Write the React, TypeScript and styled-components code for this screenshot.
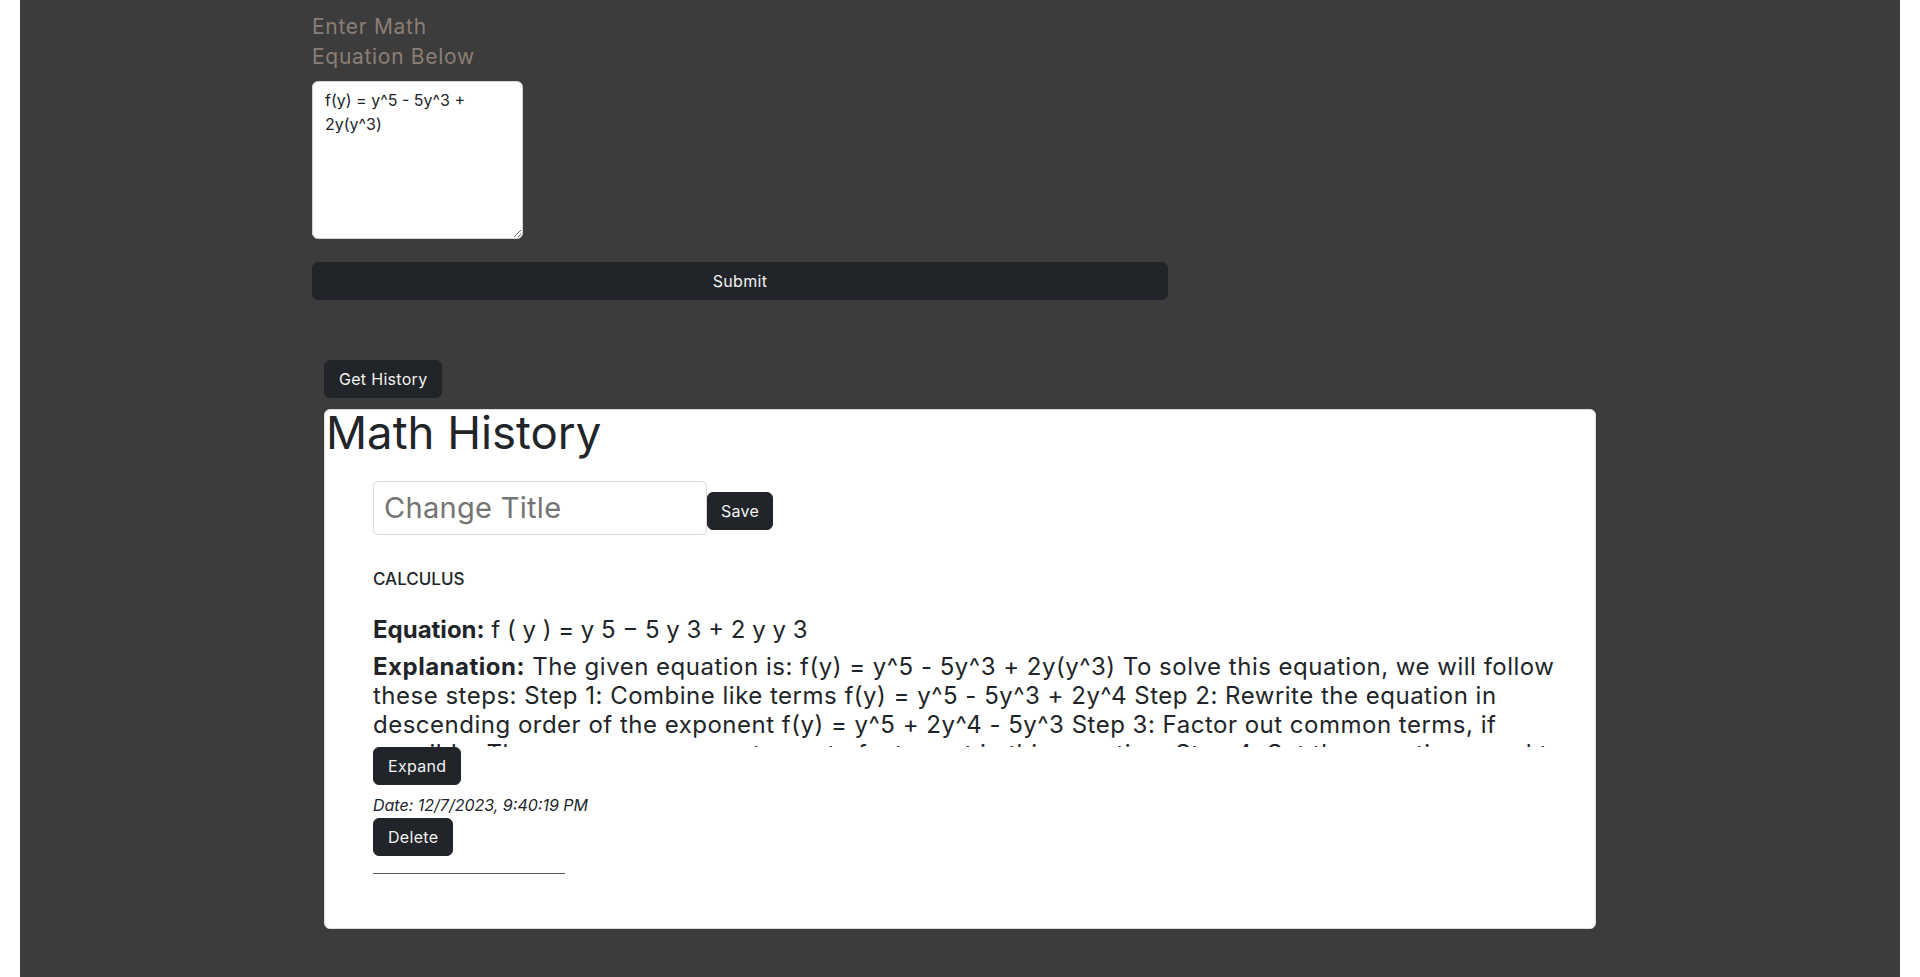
import React from "react";
import styled, { createGlobalStyle } from "styled-components";

const GlobalStyle = createGlobalStyle`
  html, body { margin: 0; padding: 0; background: #ffffff; }
  body { font-family: Inter, "Open Sans", sans-serif; color: #212529; }
  * { box-sizing: border-box; }
`;

const Page = styled.div`
  margin: 0 20px;
  min-height: 977px;
  background: #3c3c3c;
  padding: 12px 0 48px 292px;
`;

const FormColumn = styled.form`
  display: flex;
  flex-direction: column;
  align-items: flex-start;
  width: 856px;
`;

const Label = styled.label`
  font-size: 21px;
  line-height: 30px;
  letter-spacing: 0.7px;
  color: #8a7e76;
  margin-bottom: 9px;
`;

const TextArea = styled.textarea`
  width: 211px;
  height: 158px;
  padding: 6px 12px;
  font-family: Inter, sans-serif;
  font-size: 16px;
  line-height: 24px;
  color: #212529;
  background: #fff;
  border: 1px solid #ced4da;
  border-radius: 6px;
  outline: none;
`;

const Button = styled.button<{ $block?: boolean }>`
  font-family: Inter, sans-serif;
  font-size: 16px;
  line-height: 24px;
  letter-spacing: 0.3px;
  color: #f2f2f2;
  background: #212529;
  border: 1px solid #212529;
  border-radius: 6px;
  padding: 6px 14px;
  cursor: pointer;
  ${(p) => (p.$block ? "width: 100%; margin-top: 23px;" : "")}
`;

const HistorySection = styled.section`
  margin-top: 60px;
  margin-left: 12px;
  width: 1272px;
  display: flex;
  flex-direction: column;
  align-items: flex-start;
  gap: 11px;
`;

const Card = styled.div`
  width: 100%;
  background: #ffffff;
  border: 1px solid #dcdcdc;
  border-radius: 6px;
  padding: 0 24px 54px 0;
`;

const Title = styled.h1`
  margin: 0 0 25px 1px;
  font-size: 45.5px;
  font-weight: 400;
  line-height: 1;
  color: #212529;
`;

const Entry = styled.div`
  padding-left: 48px;
  display: flex;
  flex-direction: column;
  align-items: flex-start;
`;

const TitleRow = styled.div`
  display: flex;
  align-items: center;
`;

const TitleInput = styled.input`
  width: 334px;
  height: 54px;
  padding: 0 10px;
  font-family: Inter, sans-serif;
  font-size: 29px;
  letter-spacing: 0.3px;
  color: #212529;
  border: 1px solid #ded6cf;
  border-radius: 5px;
  outline: none;
  &::placeholder { color: #747474; }
`;

const SaveButton = styled(Button)`
  margin-top: 6px;
  padding: 6px 13px;
`;

const Category = styled.div`
  margin-top: 33px;
  font-size: 17px;
  font-weight: 500;
  line-height: 22px;
  text-transform: uppercase;
  color: #212529;
`;

const Field = styled.p`
  margin: 25px 0 8px;
  font-size: 24px;
  line-height: 29px;
  color: #212529;
  & b { font-weight: 700; }
`;

const Explanation = styled.div`
  font-size: 24px;
  line-height: 29px;
  letter-spacing: 0.5px;
  height: 95px;
  overflow: hidden;
  color: #212529;
  & b { font-weight: 700; }
`;

const DateText = styled.div`
  padding: 8px 0 1px;
  font-size: 16px;
  font-style: italic;
  line-height: 24px;
  color: #212529;
`;

const Divider = styled.hr`
  width: 192px;
  margin: 17px 0 0;
  border: 0;
  border-top: 1px solid #5a5a5a;
`;

export default function App() {
  return (
    <>
      <GlobalStyle />
      <Page>
        <FormColumn onSubmit={(e) => e.preventDefault()}>
          <Label htmlFor="eq">
            Enter Math
            <br />
            Equation Below
          </Label>
          <TextArea id="eq" defaultValue="f(y) = y^5 - 5y^3 + 2y(y^3)" />
          <Button $block type="submit">Submit</Button>
        </FormColumn>
        <HistorySection>
          <Button type="button">Get History</Button>
          <Card>
            <Title>Math History</Title>
            <Entry>
              <TitleRow>
                <TitleInput placeholder="Change Title" />
                <SaveButton type="button">Save</SaveButton>
              </TitleRow>
              <Category>Calculus</Category>
              <Field>
                <b>Equation:</b> f ( y ) = y 5 − 5 y 3 + 2 y y 3
              </Field>
              <Explanation>
                <b>Explanation:</b> The given equation is: f(y) = y^5 - 5y^3 + 2y(y^3) To solve this
                equation, we will follow these steps: Step 1: Combine like terms f(y) = y^5 - 5y^3 +
                2y^4 Step 2: Rewrite the equation in descending order of the exponent f(y) = y^5 +
                2y^4 - 5y^3 Step 3: Factor out common terms, if possible. There are no common terms
                to factor out in this equation. Step 4: Set the equation equal to zero and solve for y.
              </Explanation>
              <Button type="button">Expand</Button>
              <DateText>Date: 12/7/2023, 9:40:19 PM</DateText>
              <Button type="button">Delete</Button>
              <Divider />
            </Entry>
          </Card>
        </HistorySection>
      </Page>
    </>
  );
}
